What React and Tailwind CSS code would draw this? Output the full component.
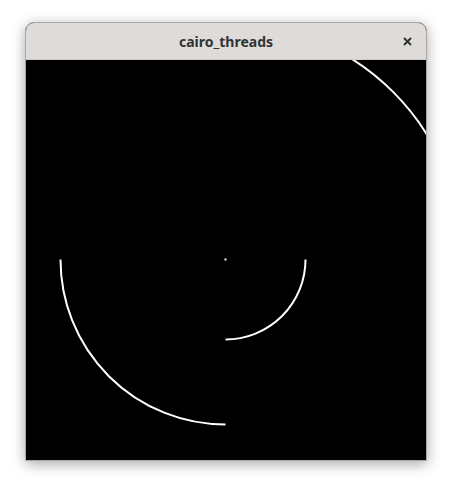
export default function App() {
  return (
    <div className="w-[452px] h-[489px] bg-white pt-[22px] pl-[25px]" style={{ fontFamily: '"Noto Sans", "DejaVu Sans", sans-serif' }}>
      <div className="w-[402px] flex flex-col rounded-t-[9px] border border-[#a9a9a7] shadow-[0_3px_14px_rgba(0,0,0,0.35)] overflow-hidden bg-black">
        <div className="h-[37px] bg-[#dedbd8] flex items-center justify-center relative border-b border-[#cfccc8]">
          <span className="text-[14px] font-bold text-[#2e3436] leading-none mt-[1px]">cairo_threads</span>
          <svg className="absolute right-[14px] top-[14px]" width="9" height="9" viewBox="0 0 9 9">
            <path d="M1 1 L8 8 M8 1 L1 8" stroke="#2e3436" strokeWidth="2" strokeLinecap="butt" />
          </svg>
        </div>
        <svg width="400" height="400" viewBox="0 0 400 400" className="block">
          <rect x="0" y="0" width="400" height="400" fill="#000" />
          <path d="M279.5 199.5 A80 80 0 0 1 199.5 279.5" stroke="#fff" strokeWidth="2" fill="none" />
          <path d="M199.5 364.5 A165 165 0 0 1 34.5 199.5" stroke="#fff" strokeWidth="2" fill="none" />
          <path d="M199.5 -37.5 A237 237 0 0 1 436.5 199.5" stroke="#fff" strokeWidth="2" fill="none" />
          <rect x="198.5" y="198.5" width="2" height="2" fill="#fff" />
        </svg>
      </div>
    </div>
  );
}
